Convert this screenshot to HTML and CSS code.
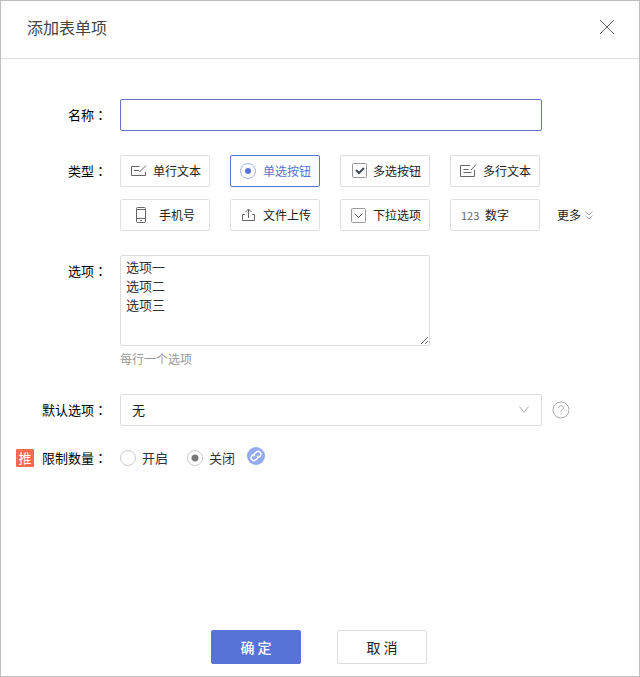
FILE: index.html
```html
<!DOCTYPE html>
<html lang="zh-CN">
<head>
<meta charset="utf-8">
<meta name="viewport" content="width=device-width, initial-scale=1">
<title>添加表单项</title>
<link rel="stylesheet" href="styles.css">
</head>
<body>
<form class="dialog">
  <header class="dialog-header">
    <h1 class="dialog-title">添加表单项</h1>
    <button class="close" type="button" aria-label="关闭">
      <svg width="16" height="16" viewBox="0 0 16 16"><path d="M1 1l14 14M15 1L1 15"/></svg>
    </button>
  </header>

  <main class="dialog-body">
    <div class="row">
      <label class="row-label" for="name">名称<span class="colon">：</span></label>
      <input class="control text-input" id="name" type="text">
    </div>

    <div class="row" role="group" aria-labelledby="type-label">
      <span class="row-label" id="type-label">类型<span class="colon">：</span></span>
      <div class="types">
        <button class="type" type="button">
          <svg width="16" height="16" viewBox="0 0 16 16"><path d="M8.500 3.500H.5v9h14V9M3 7.500h5M8.500 9L15 2.500"/></svg>单行文本
        </button>
        <button class="type selected" type="button" aria-pressed="true">
          <svg width="16" height="16" viewBox="0 0 16 16"><circle class="ring" cx="7" cy="8" r="7.500"/><circle class="dot" cx="7" cy="8" r="3"/></svg>单选按钮
        </button>
        <button class="type" type="button">
          <svg width="16" height="16" viewBox="0 0 16 16"><rect class="box" x="1.500" y=".5" width="14" height="14" rx="1"/><path class="tick" d="M5 7l3 3 5-5"/></svg>多选按钮
        </button>
        <button class="type" type="button">
          <svg width="16" height="16" viewBox="0 0 16 16"><path d="M9 2.500H-.5v11h14V7M2.500 6.500h5M2.500 9.500h8M10 7l5-5.500"/></svg>多行文本
        </button>
        <button class="type" type="button">
          <svg width="22" height="16" viewBox="0 0 22 16"><rect x="5.500" y=".5" width="9" height="15" rx="1"/><path d="M5.500 2.500h9M5.500 11.500h9M9 13.500h2"/></svg>手机号
        </button>
        <button class="type" type="button">
          <svg width="16" height="16" viewBox="0 0 16 16"><path d="M4 7.500H1.500v6h12v-6H11M7.500 11V2M4.500 5l3-3 3 3"/></svg>文件上传
        </button>
        <button class="type" type="button">
          <svg width="16" height="16" viewBox="0 0 16 16"><rect class="box" x=".5" y="1.500" width="14" height="14" rx="1"/><path d="M3.500 6.500l4 4 4-4"/></svg>下拉选项
        </button>
        <button class="type" type="button"><span class="digits">123</span>数字</button>
      </div>
      <button class="more" type="button">更多<svg width="8" height="9" viewBox="0 0 8 9"><path d="M.5 .5L4 4 7.500 .5M.5 4.500L4 8l3.500-3.500"/></svg></button>
    </div>

    <div class="row">
      <label class="row-label" for="options">选项<span class="colon">：</span></label>
      <div class="field">
        <textarea class="control options" id="options" aria-describedby="options-hint">选项一
选项二
选项三</textarea>
        <p class="hint" id="options-hint">每行一个选项</p>
      </div>
    </div>

    <div class="row default-row">
      <label class="row-label" for="default">默认选项<span class="colon">：</span></label>
      <div class="select-wrap">
        <select class="control select" id="default"><option>无</option></select>
        <svg class="chevron" width="10" height="8" viewBox="0 0 10 8"><path d="M.5 .5L5 6.500 9.500 .5"/></svg>
      </div>
      <button class="help" type="button" aria-label="帮助">
        <svg width="18" height="18" viewBox="0 0 18 18"><circle cx="9" cy="9" r="8"/><path d="M6.500 7.200C6.500 4 11.500 4 11.500 7c0 1.800-2.500 1.800-2.500 4M9 12.200v1.300"/></svg>
      </button>
    </div>

    <div class="row limit-row" role="radiogroup" aria-labelledby="limit-label">
      <div class="row-label"><span class="badge">推</span><span class="label-text" id="limit-label">限制数量<span class="colon">：</span></span></div>
      <div class="radios">
        <label class="radio"><input type="radio" name="limit">开启</label>
        <label class="radio"><input type="radio" name="limit" checked>关闭</label>
        <a class="link" href="#" aria-label="链接">
          <svg width="18" height="18" viewBox="0 0 18 18"><circle cx="9" cy="9" r="9"/><path transform="rotate(-40 9 9)" d="M8 6.200H6.300a2.800 2.800 0 0 0 0 5.600H8a2.800 2.800 0 0 0 2.600-2M10 11.800h1.700a2.800 2.800 0 0 0 0-5.600H10a2.800 2.800 0 0 0-2.600 2"/></svg>
        </a>
      </div>
    </div>
  </main>

  <footer class="dialog-footer">
    <button class="action primary" type="submit">确 定</button>
    <button class="action" type="button">取 消</button>
  </footer>
</form>
</body>
</html>
```
FILE: styles.css
```css
* {
  box-sizing: border-box;
}

body {
  margin: 0;
  color: #222;
  background: #fff;
  font: 13px/18px "Noto Sans CJK SC", sans-serif;
}

button,
input,
select,
textarea {
  margin: 0;
  color: inherit;
  font: inherit;
}

button {
  padding: 0;
  border: 0;
  background: none;
  cursor: pointer;
}

svg {
  flex: none;
  fill: none;
  stroke: #666;
}

.dialog {
  display: flex;
  flex-direction: column;
  min-height: 100vh;
  border: 1px solid #bfbfbf;
}

.dialog-header {
  display: flex;
  align-items: center;
  justify-content: space-between;
  min-height: 58px;
  padding: 10px 24px 16px 26px;
  border-bottom: 1px solid #ddd;
}

.dialog-title {
  margin: 0;
  color: #444;
  font-size: 16px;
  font-weight: 400;
  line-height: 24px;
}

.close {
  display: flex;
}

.dialog-body {
  display: flex;
  flex-direction: column;
  gap: 24px;
  padding-top: 40px;
}

.row {
  display: grid;
  grid-template-columns: 119px minmax(0, 1fr) 97px;
}

.row-label,
.label-text {
  display: flex;
  align-items: center;
  color: #000;
  white-space: nowrap;
}

.row-label {
  justify-content: flex-end;
  height: 32px;
  padding-right: 13px;
}

.colon {
  font-family: "Noto Sans CJK TC", sans-serif;
}

.control {
  width: 100%;
  border: 1px solid #ddd;
  border-radius: 2px;
  background: #fff;
  outline: none;
}

.text-input {
  height: 32px;
  padding: 0 10px;
  border-color: #6474c0;
}

.types {
  display: flex;
  flex-wrap: wrap;
  gap: 12px 20px;
}

.type {
  display: flex;
  align-items: center;
  gap: 6px;
  width: 90px;
  height: 32px;
  padding-left: 10px;
  border: 1px solid #e0e0e0;
  border-radius: 2px;
  font-size: 12px;
  white-space: nowrap;
}

.type svg {
  overflow: visible;
}

.selected {
  border-color: #5873d8;
  color: #5873d8;
}

.ring {
  stroke: #a3b2e8;
}

.dot {
  fill: #5873d8;
  stroke: none;
}

.box {
  stroke: #999;
}

.tick {
  stroke: #444b57;
  stroke-width: 2;
}

.digits {
  width: 18px;
  color: #666;
  font-size: 11px;
}

.more {
  display: flex;
  align-items: center;
  align-self: end;
  gap: 4px;
  height: 32px;
  margin-left: 15px;
  font-size: 12px;
}

.more svg {
  stroke: #aaa;
}

.options {
  display: block;
  width: 310px;
  max-width: 100%;
  height: 91px;
  padding: 1px 5px;
  color: #333;
  line-height: 19px;
}

.hint {
  margin: 4px 0 0;
  color: #999;
  font-size: 12px;
}

.default-row {
  margin-top: 2px;
}

.select-wrap {
  position: relative;
}

.select {
  display: block;
  height: 32px;
  padding: 0 32px 0 11px;
  appearance: none;
}

.chevron {
  position: absolute;
  top: 12px;
  right: 13px;
  stroke: #aaa;
  pointer-events: none;
}

.help {
  display: flex;
  align-items: center;
  justify-self: start;
  margin-left: 10px;
}

.help svg {
  stroke: #aaa;
}

.limit-row {
  margin-top: -8px;
}

.badge {
  width: 18px;
  height: 18px;
  margin-right: 8px;
  border-radius: 1px;
  color: #fff;
  background: #fa6850;
  text-align: center;
}

.radios {
  display: flex;
  align-items: center;
}

.radio {
  display: flex;
  align-items: center;
  gap: 6px;
  margin-right: 19px;
  color: #333;
}

.radio input {
  width: 16px;
  height: 16px;
  border: 1px solid #ccc;
  border-radius: 50%;
  appearance: none;
}

.radio input:checked {
  background: radial-gradient(circle, #777 3px, transparent 4px);
}

.radio:has(:checked) {
  margin-right: 12px;
}

.link {
  display: flex;
  margin-bottom: 4px;
}

.link circle {
  fill: #93a9f0;
  stroke: none;
}

.link path {
  stroke: #fff;
  stroke-width: 1.5;
}

.dialog-footer {
  display: flex;
  justify-content: center;
  gap: 36px;
  margin-top: auto;
  padding: 24px 2px 12px 0;
}

.action {
  width: 90px;
  height: 34px;
  border: 1px solid #ddd;
  border-radius: 2px;
  font-size: 14px;
}

.primary {
  border-color: #5873d8;
  color: #fff;
  background: #5873d8;
  font-weight: 500;
}
```
